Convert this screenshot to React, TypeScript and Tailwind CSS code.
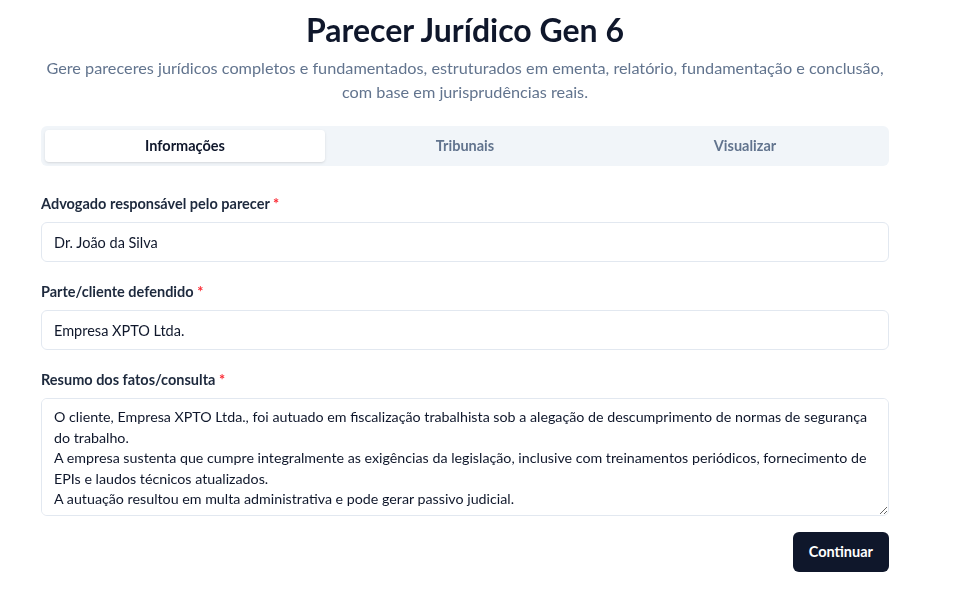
import { useState } from "react";

const tabs = ["Informações", "Tribunais", "Visualizar"];

export default function App() {
  const [active, setActive] = useState(0);
  const [advogado, setAdvogado] = useState("Dr. João da Silva");
  const [cliente, setCliente] = useState("Empresa XPTO Ltda.");
  const [resumo, setResumo] = useState(
    "O cliente, Empresa XPTO Ltda., foi autuado em fiscalização trabalhista sob a alegação de descumprimento de normas de segurança do trabalho.\nA empresa sustenta que cumpre integralmente as exigências da legislação, inclusive com treinamentos periódicos, fornecimento de EPIs e laudos técnicos atualizados.\nA autuação resultou em multa administrativa e pode gerar passivo judicial."
  );

  return (
    <main className="min-h-screen bg-white font-['Lato',sans-serif] text-slate-900">
      <div className="ml-[17px] w-[896px] px-6 pt-[10px] pb-6">
        {/* Header */}
        <header className="text-center">
          <h1 className="text-[32px] leading-10 font-bold text-slate-900">
            Parecer Jurídico Gen 6
          </h1>
          <p className="mt-1.5 text-[16.25px] leading-6 text-slate-500">
            Gere pareceres jurídicos completos e fundamentados, estruturados em
            ementa, relatório, fundamentação e conclusão, com base em
            jurisprudências reais.
          </p>
        </header>

        {/* Tabs */}
        <div className="mt-[22px] grid grid-cols-3 rounded-md bg-slate-100 p-1">
          {tabs.map((tab, i) => (
            <button
              key={tab}
              onClick={() => setActive(i)}
              className={
                i === active
                  ? "h-8 rounded-[4px] bg-white text-[14.5px] font-bold text-slate-900 shadow-sm"
                  : "h-8 rounded-[4px] text-[14.5px] font-bold text-slate-500"
              }
            >
              {tab}
            </button>
          ))}
        </div>

        {/* Form */}
        <form className="mt-7 space-y-5" onSubmit={(e) => e.preventDefault()}>
          <div>
            <label className="mb-2 block text-[14.5px] leading-5 font-bold text-slate-800">
              Advogado responsável pelo parecer{" "}
              <span className="text-red-500">*</span>
            </label>
            <input
              value={advogado}
              onChange={(e) => setAdvogado(e.target.value)}
              className="h-10 w-full rounded-md border border-slate-200 bg-white px-3 text-[14.5px] text-slate-900 outline-none"
            />
          </div>

          <div>
            <label className="mb-2 block text-[14.5px] leading-5 font-bold text-slate-800">
              Parte/cliente defendido <span className="text-red-500">*</span>
            </label>
            <input
              value={cliente}
              onChange={(e) => setCliente(e.target.value)}
              className="h-10 w-full rounded-md border border-slate-200 bg-white px-3 text-[14.5px] text-slate-900 outline-none"
            />
          </div>

          <div>
            <label className="mb-2 block text-[14.5px] leading-5 font-bold text-slate-800">
              Resumo dos fatos/consulta <span className="text-red-500">*</span>
            </label>
            <textarea
              value={resumo}
              onChange={(e) => setResumo(e.target.value)}
              className="block h-[118px] w-full rounded-md border border-slate-200 bg-white px-3 py-2 text-[14.25px] leading-[20.5px] text-slate-900 outline-none"
            />
          </div>

          <div className="flex justify-end">
            <button
              type="submit"
              className="-mt-1 h-10 rounded-md bg-slate-900 px-4 text-[14.5px] font-bold text-white"
            >
              Continuar
            </button>
          </div>
        </form>
      </div>
    </main>
  );
}
